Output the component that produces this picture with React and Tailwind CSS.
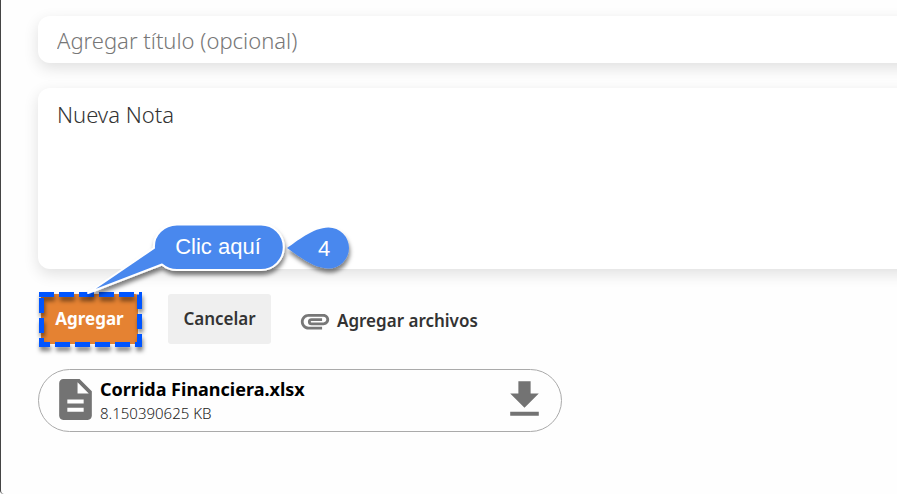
import { MdAttachment, MdDescription, MdFileDownload } from 'react-icons/md';

const fieldClass =
  'block w-full rounded-l-xl bg-white px-[19px] text-[22px] font-light shadow-[0_5px_15px_rgba(0,0,0,0.12)] outline-none';

function Callout() {
  return (
    <svg
      className="pointer-events-none absolute -left-[3px] -top-[80px] overflow-visible"
      width="330"
      height="140"
      viewBox="38 214 330 140"
      aria-hidden="true"
    >
      <defs>
        <filter id="soft-shadow" x="-20%" y="-20%" width="140%" height="150%">
          <feDropShadow dx="1" dy="4" stdDeviation="2" floodColor="#000" floodOpacity="0.5" />
        </filter>
      </defs>

      {/* Dashed highlight */}
      <path
        d="M39 294.5H139.5V344.5H41.5V297"
        fill="none"
        stroke="#0055ff"
        strokeWidth="5"
        strokeDasharray="15 5"
        filter="url(#soft-shadow)"
      />

      {/* Speech bubble */}
      <path
        d="M177 224.5H261A22.7 22.7 0 0 1 261 270H177C171 270 166 268 162 264.5L88 293L154 248C153 235 164 224.5 177 224.5Z"
        fill="#4a88ee"
        stroke="#fff"
        strokeWidth="2"
        strokeLinejoin="round"
        filter="url(#soft-shadow)"
      />

      {/* Step marker */}
      <path
        d="M287 248C296 242 313 227.5 328.5 227.5A20.5 20.5 0 0 1 328.5 268.5C313 268.5 296 254 287 248Z"
        fill="#4a88ee"
        filter="url(#soft-shadow)"
      />

      <g fill="#fff" fontFamily="Liberation Sans, Arial, sans-serif" fontSize="22" textAnchor="middle">
        <text x="218" y="254">Clic aquí</text>
        <text x="324" y="256">4</text>
      </g>
    </svg>
  );
}

function FileCard({ name, size }) {
  return (
    <div className="mt-[25px] flex h-[63px] w-full max-w-[524px] items-center rounded-full border border-[#aaa] px-3 pb-0.5">
      <MdDescription className="size-[49px] shrink-0 text-[#737373]" />
      <div className="min-w-0 flex-1 pt-0.5">
        <p className="truncate text-[18px] font-bold leading-6 text-black">{name}</p>
        <p className="text-[15px] font-light leading-6 text-[#222]">{size}</p>
      </div>
      <button type="button" aria-label="Descargar">
        <MdFileDownload className="size-[49px] text-[#737373]" />
      </button>
    </div>
  );
}

export default function App() {
  return (
    <div className="min-h-screen overflow-hidden rounded-bl-sm border-l border-[#444] bg-[#fefefe] pb-8 pl-[37px] pt-4 font-['Noto_Sans',sans-serif] text-[#333]">
      {/* Fields run past the right edge */}
      <form className="-mr-8" onSubmit={(e) => e.preventDefault()}>
        <input
          type="text"
          aria-label="Título"
          placeholder="Agregar título (opcional)"
          className={`${fieldClass} h-[47px] placeholder:text-[#777]`}
        />
        <textarea
          aria-label="Nota"
          defaultValue="Nueva Nota"
          className={`${fieldClass} mt-[25px] h-[181px] resize-none py-3 leading-7`}
        />

        <div className="mt-[25px] flex items-center pl-[3px]">
          <div className="relative">
            <button type="submit" className="block h-[50px] w-[97px] rounded-[3px] bg-[#e58232] text-[17px] font-bold text-white">
              Agregar
            </button>
            <Callout />
          </div>
          <button type="button" className="ml-[30px] h-[50px] w-[103px] rounded-[3px] bg-[#efefef] text-[17px] font-semibold">
            Cancelar
          </button>
          <button type="button" className="ml-[27px] mt-1 flex items-center gap-[5px] text-[17px] font-semibold">
            <MdAttachment className="size-[34px] text-[#777]" />
            Agregar archivos
          </button>
        </div>
      </form>

      <FileCard name="Corrida Financiera.xlsx" size="8.150390625 KB" />
    </div>
  );
}
